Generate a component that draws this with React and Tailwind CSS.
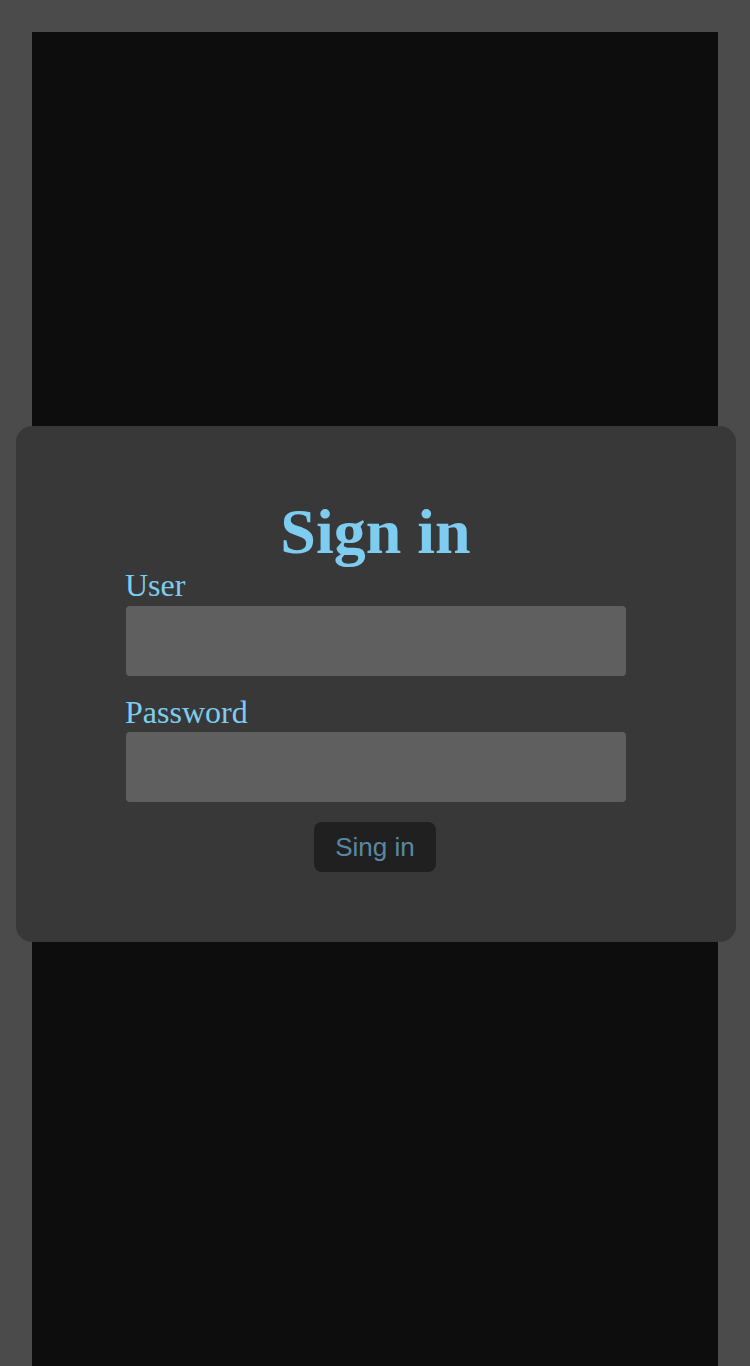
export default function App() {
  return (
    <div className="h-[1366px] overflow-hidden bg-[#4b4b4b] px-8 pt-8">
      <div className="flex h-[1400px] items-start justify-start bg-[#0d0d0d]">
        <div className="ml-[-16px] mt-[394px] flex w-[720px] shrink-0 flex-col items-center rounded-2xl bg-[#383838] py-[70px] pr-[2px]" style={{ fontFamily: '"Liberation Serif", serif' }}>
          <h1 className="ml-px text-[64px] font-bold leading-[71px] text-[#7ecdf0]">Sign in</h1>
          <div className="flex w-[500px] flex-col">
            <label className="text-[32px] leading-[36px] text-[#7ecdf0]">User</label>
            <input className="ml-px mt-[3px] h-[70px] w-[500px] shrink-0 rounded bg-[#5f5f5f] outline-none" />
            <label className="mt-[18px] text-[32px] leading-[36px] text-[#7ecdf0]">Password</label>
            <input type="password" className="ml-px mt-[2px] h-[70px] w-[500px] shrink-0 rounded bg-[#5f5f5f] outline-none" />
          </div>
          <button className="mt-5 h-[50px] rounded-lg bg-[#202020] px-[21px] text-[26px] text-[#5a88a2]" style={{ fontFamily: '"Liberation Sans", sans-serif' }}>Sing in</button>
        </div>
      </div>
    </div>
  );
}
